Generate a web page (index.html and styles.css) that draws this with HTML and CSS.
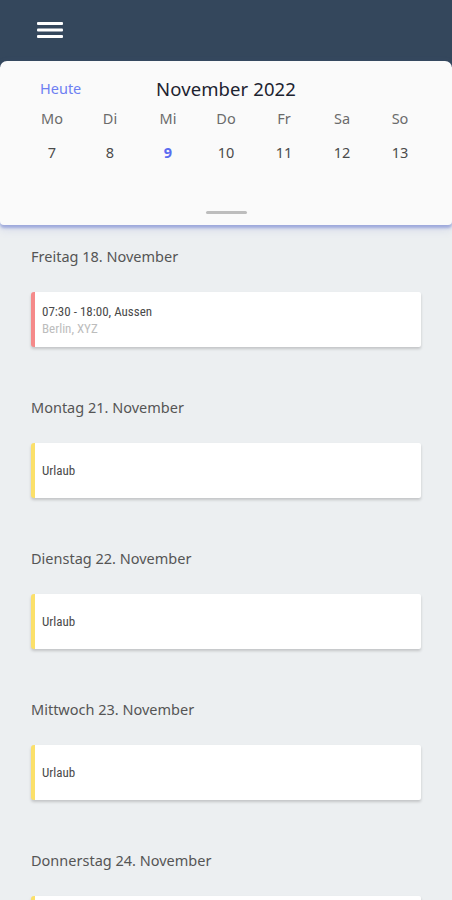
FILE: index.html
```html
<!DOCTYPE html>
<html lang="de">
<head>
  <meta charset="UTF-8" />
  <meta name="viewport" content="width=device-width, initial-scale=1" />
  <title>Kalender</title>
  <link rel="stylesheet" href="styles.css">
</head>
<body>
  <header class="topbar">
    <button class="menu-btn" title="Menü">
      <svg width="26" height="18" viewBox="0 0 26 18">
        <rect x="0" y="1" width="26" height="3" rx="1" fill="#fff" />
        <rect x="0" y="7.5" width="26" height="3" rx="1" fill="#fff" />
        <rect x="0" y="14" width="26" height="3" rx="1" fill="#fff" />
      </svg>
    </button>
  </header>

  <section class="calendar">
    <div class="cal-head">
      <a class="today" href="#">Heute</a>
      <div class="month">November 2022</div>
      <span></span>
    </div>
    <div class="week names">
      <span>Mo</span><span>Di</span><span>Mi</span><span>Do</span><span>Fr</span><span>Sa</span><span>So</span>
    </div>
    <div class="week days">
      <span>7</span><span>8</span><span class="current">9</span><span>10</span><span>11</span><span>12</span><span>13</span>
    </div>
    <div class="handle"></div>
  </section>

  <main class="agenda">
    <div class="day">
      <h2>Freitag 18. November</h2>
      <div class="entry red">
        <div class="entry-title">07:30 - 18:00, Aussen</div>
        <div class="entry-sub">Berlin, XYZ</div>
      </div>
    </div>

    <div class="day">
      <h2>Montag 21. November</h2>
      <div class="entry yellow">
        <div class="entry-title">Urlaub</div>
      </div>
    </div>

    <div class="day">
      <h2>Dienstag 22. November</h2>
      <div class="entry yellow">
        <div class="entry-title">Urlaub</div>
      </div>
    </div>

    <div class="day">
      <h2>Mittwoch 23. November</h2>
      <div class="entry yellow">
        <div class="entry-title">Urlaub</div>
      </div>
    </div>

    <div class="day">
      <h2>Donnerstag 24. November</h2>
      <div class="entry yellow">
        <div class="entry-title">Urlaub</div>
      </div>
    </div>
  </main>
</body>
</html>
```

FILE: styles.css
```css
:root {
  --bar-bg: #34475c;
  --page-bg: #eceff1;
  --card-bg: #fafafa;
  --accent: #5a6cf0;
  --text: #444;
  --muted: #666;
}

body {
  margin: 0;
  height: 100vh;
  overflow: hidden;
  background: var(--page-bg);
  font-family: 'Noto Sans', 'Open Sans', sans-serif;
  color: var(--text);
}

.topbar {
  height: 67px;
  background: var(--bar-bg);
  display: flex;
  align-items: flex-start;
  padding: 0 37px;
}

.menu-btn {
  margin-top: 21px;
  padding: 0;
  border: none;
  background: none;
  line-height: 0;
  cursor: pointer;
}

.calendar {
  position: relative;
  margin-top: -6px;
  height: 164px;
  background: var(--card-bg);
  border-radius: 7px 7px 4px 4px;
  box-shadow: 0 3px 3px rgba(110, 125, 205, 0.55), 0 4px 10px rgba(110, 125, 205, 0.2);
  display: flex;
  flex-direction: column;
}

.cal-head {
  display: grid;
  grid-template-columns: 1fr auto 1fr;
  align-items: center;
  height: 26px;
  margin-top: 14px;
}

.today {
  padding-left: 40px;
  font-size: 14.5px;
  color: #6e7ff2;
  text-decoration: none;
}

.month {
  font-size: 18.5px;
  color: #1d2330;
  letter-spacing: 0.1px;
}

.week {
  display: grid;
  grid-template-columns: repeat(7, 1fr);
  padding: 0 23px;
  text-align: center;
}

.week.names {
  margin-top: 5px;
  height: 24px;
  line-height: 24px;
  font-size: 14.5px;
  color: #6b6b6b;
}

.week.days {
  margin-top: 10px;
  height: 24px;
  line-height: 24px;
  font-size: 14.5px;
  color: #4a4a4a;
}

.week.days .current {
  color: var(--accent);
  font-weight: 700;
}

.handle {
  width: 41px;
  height: 3px;
  border-radius: 2px;
  background: #bdbdbd;
  margin: auto auto 11px;
}

.agenda {
  padding: 21px 31px 0;
}

.day h2 {
  margin: 0;
  height: 20px;
  line-height: 20px;
  font-size: 14.5px;
  font-weight: 400;
  color: #555;
}

.entry {
  margin: 26px 0 50px;
  height: 55px;
  box-sizing: border-box;
  background: #fff;
  border-left: 4px solid;
  border-radius: 3px 2px 2px 3px;
  box-shadow: 0 2px 3px rgba(0, 0, 0, 0.18);
  padding: 0 7px;
  display: flex;
  flex-direction: column;
  justify-content: center;
  font-family: 'Liberation Sans Narrow', 'Roboto', sans-serif;
  font-stretch: condensed;
  font-size: 13px;
}

.entry.red {
  border-left-color: #f58a8a;
}

.entry.yellow {
  border-left-color: #fbe06a;
}

.entry-title {
  color: #4a4a4a;
  line-height: 17px;
}

.entry-sub {
  color: #bdbdbd;
  line-height: 17px;
}
```
